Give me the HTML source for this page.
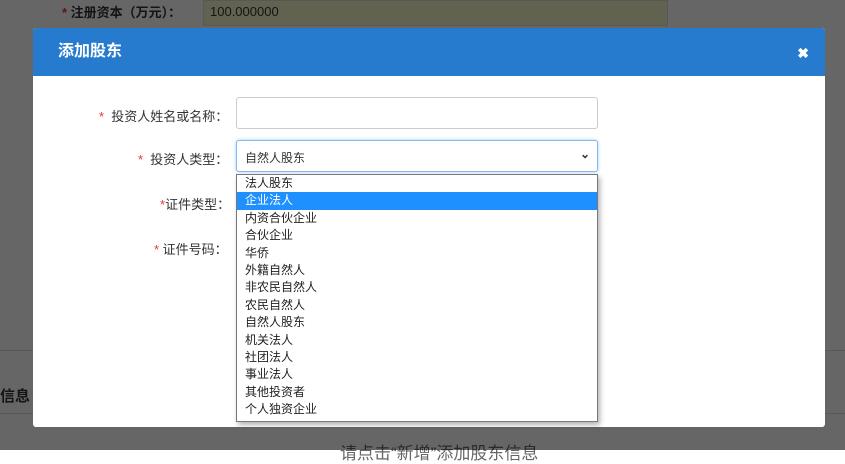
<!DOCTYPE html>
<html><head><meta charset="utf-8"><style>
*{margin:0;padding:0;box-sizing:border-box}
body{width:845px;height:450px;overflow:hidden;position:relative;background:#fff;font-family:"Liberation Sans","Noto Sans CJK SC",sans-serif;font-size:13px;color:#333}
.abs{position:absolute}
.ov{position:absolute;left:0;top:0;width:845px;height:450px;background:rgba(0,0,0,0.6)}
.modal{position:absolute;left:33px;top:28px;width:792px;height:399px;background:#fff;border-radius:3px}
.hd{height:48px;background:#267bcf;color:#fff;font-weight:bold;font-size:16px;line-height:48px;padding-left:25px;border-radius:3px 3px 0 0}
.x{position:absolute;right:16px;top:0;line-height:50px;font-size:14px;color:#fff;font-weight:bold}
.lbl{position:absolute;font-size:13px;color:#333;text-align:right}
.r{color:#e33}
.inp{position:absolute;left:203px;width:362px;border:1px solid #ccc;border-radius:3px;background:#fff}
.dd{position:absolute;left:236px;top:174px;width:362px;height:248px;background:#fff;border:1px solid #777;box-shadow:2px 3px 5px rgba(0,0,0,.3)}
.dd div{height:17.4px;line-height:17.4px;padding-left:8px;font-size:12px;color:#222}
.dd .s{background:#1e90ff;color:#fff}
</style></head><body>
<div class="abs" style="left:62px;top:2px;font-size:13px;font-weight:bold"><span class="r">*</span> 注册资本（万元）：</div>
<div class="abs" style="left:203px;top:0;width:465px;height:26px;background:#f5f5c8;border:1px solid #ddd;padding:3px 6px;font-size:13px">100.000000</div>
<div class="abs" style="left:0;top:350px;width:845px;border-top:1px solid #ddd"></div>
<div class="abs" style="left:0;top:385px;font-size:15px;font-weight:bold">信息</div>
<div class="abs" style="left:0;top:413px;width:845px;border-top:1px solid #ddd"></div>
<div class="abs" style="left:340px;top:439px;font-size:17px;color:#666">请点击“新增”添加股东信息</div>
<div class="ov"></div>
<div class="modal">
<div class="hd">添加股东<span class="x">✖</span></div>
<div class="lbl" style="left:66px;top:78px"><span class="r">*</span>&nbsp; 投资人姓名或名称：</div>
<div class="inp" style="top:69px;height:32px"></div>
<div class="lbl" style="left:105px;top:121px"><span class="r">*</span>&nbsp; 投资人类型：</div>
<div class="inp" style="top:112px;height:32px;border-color:#8ab8e8;box-shadow:0 0 3px #9cf;padding:8px 8px;font-size:12px">自然人股东<span style="position:absolute;right:7px;top:6px;font-size:12px;font-weight:bold">⌄</span></div>
<div class="lbl" style="left:127px;top:166px"><span class="r">*</span>证件类型：</div>
<div class="lbl" style="left:121px;top:211px"><span class="r">*</span> 证件号码：</div>
<div class="inp" style="top:203px;height:30px"></div>
</div>
<div class="dd">
<div>法人股东</div><div class="s">企业法人</div><div>内资合伙企业</div><div>合伙企业</div><div>华侨</div><div>外籍自然人</div><div>非农民自然人</div><div>农民自然人</div><div>自然人股东</div><div>机关法人</div><div>社团法人</div><div>事业法人</div><div>其他投资者</div><div>个人独资企业</div>
</div>
</body></html>
